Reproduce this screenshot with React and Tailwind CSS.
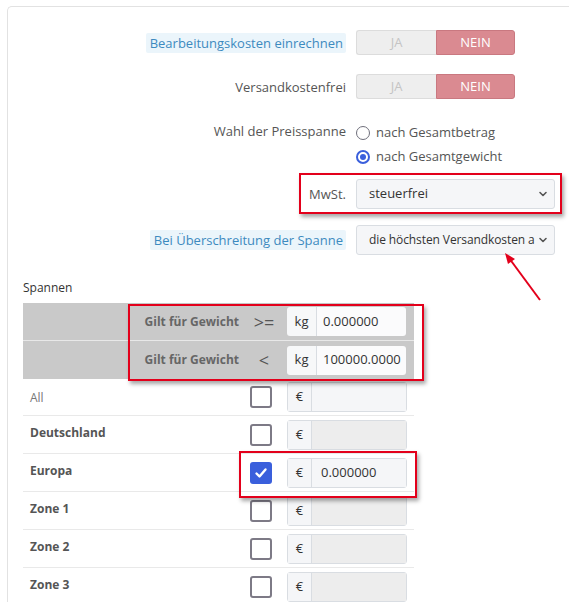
import { useState } from 'react'

const font = { fontFamily: '"Open Sans", "Noto Sans", sans-serif' }

function Chevron() {
  return (
    <svg width="10" height="10" viewBox="0 0 10 10" className="shrink-0">
      <path d="M2 3.5 L5 6.5 L8 3.5" fill="none" stroke="#555" strokeWidth="1.6" strokeLinecap="round" strokeLinejoin="round" />
    </svg>
  )
}

function Toggle() {
  return (
    <div className="flex h-[25px] w-[159px] text-[13px]">
      <div className="flex w-[80px] items-center justify-center rounded-l-[3px] border border-r-0 border-[#dcdcdc] bg-[#eeeeee] text-[#c4c4c4]">
        JA
      </div>
      <div className="flex flex-1 items-center justify-center rounded-r-[3px] border border-[#c97880] bg-[#da8a91] text-white">
        NEIN
      </div>
    </div>
  )
}

function Radio({ checked, label }) {
  return (
    <div className="flex h-[24px] items-center gap-[6px] text-[13px] text-[#555]">
      <span
        className={
          checked
            ? 'flex h-[14px] w-[14px] items-center justify-center rounded-full border-2 border-[#3a5fdc]'
            : 'h-[14px] w-[14px] rounded-full border-[1.5px] border-[#6f6f7b]'
        }
      >
        {checked && <span className="h-[6px] w-[6px] rounded-full bg-[#3a5fdc]" />}
      </span>
      <span>{label}</span>
    </div>
  )
}

function FakeSelect({ value, tight }) {
  return (
    <div className="flex h-[30px] w-[199px] items-center rounded-[3px] border border-[#d9dde2] bg-[#f5f6f8] pl-[12px] pr-[6px] text-[13px] text-[#333]">
      <span className={`flex-1 overflow-hidden whitespace-nowrap ${tight ? 'text-[12px] tracking-[-0.1px]' : ''}`}>{value}</span>
      <Chevron />
    </div>
  )
}

function FormRow({ label, highlight, children, align = 'items-center' }) {
  return (
    <div className={`flex ${align} gap-[10px]`}>
      <div className="flex w-[338px] shrink-0 justify-end text-[13px]">
        {highlight ? (
          <span className="rounded-[2px] bg-[#ebf5fb] px-[4px] pr-[3px] leading-[20px] text-[#3d8abf]">{label}</span>
        ) : (
          <span className="leading-[20px] text-[#555]">{label}</span>
        )}
      </div>
      {children}
    </div>
  )
}

function Checkbox({ checked }) {
  if (checked) {
    return (
      <span className="flex h-[22px] w-[22px] items-center justify-center rounded-[3px] bg-[#3a5fdc]">
        <svg width="14" height="14" viewBox="0 0 14 14">
          <path d="M2.5 7.5 L5.5 10.5 L11.5 3.5" fill="none" stroke="white" strokeWidth="2.4" strokeLinecap="round" strokeLinejoin="round" />
        </svg>
      </span>
    )
  }
  return <span className="h-[22px] w-[22px] rounded-[3px] border-2 border-[#7d7a86] bg-white" />
}

function PriceInput({ value, disabled }) {
  return (
    <div className="flex h-[30px] w-[120px] rounded-[3px] border border-[#d9dde2] text-[13px]">
      <div className="flex w-[24px] items-center justify-center border-r border-[#d9dde2] bg-[#f5f6f8] text-[#333]">€</div>
      <div
        className={`flex flex-1 items-center pl-[9px] text-[#333] ${disabled ? 'bg-[#ededed]' : 'bg-[#f5f6f8]'}`}
      >
        {value}
      </div>
    </div>
  )
}

function WeightRow({ sign, value, border }) {
  return (
    <div className={`flex h-[38px] items-center bg-[#c9c9c9] ${border ? 'border-b border-[#e8e8e8]' : ''}`}>
      <div className="flex flex-1 items-center justify-end text-[12px] font-bold text-[#666]">
        <span>Gilt für Gewicht</span>
        <span className="ml-[10px] w-[30px] text-center text-[18px] leading-[20px] font-normal text-[#555]">{sign}</span>
      </div>
      <div className="ml-[8px] mr-[8px] flex h-[29px] w-[119px] overflow-hidden rounded-[3px] text-[13px] text-[#333]">
        <div className="flex w-[30px] items-center justify-center border-r border-[#d9dde2] bg-[#f7f8f9]">kg</div>
        <div className="flex flex-1 items-center bg-[#fbfbfc] pl-[6px]">{value}</div>
      </div>
    </div>
  )
}

const zones = [
  { name: 'All', bold: false, disabled: false },
  { name: 'Deutschland', bold: true, disabled: true },
  { name: 'Europa', bold: true, disabled: false, checked: true, value: '0.000000' },
  { name: 'Zone 1', bold: true, disabled: true },
  { name: 'Zone 2', bold: true, disabled: true },
  { name: 'Zone 3', bold: true, disabled: true },
]

export default function App() {
  const [zoneList] = useState(zones)

  return (
    <div className="relative h-[602px] w-[569px] overflow-hidden bg-white" style={font}>
      <div className="ml-[7px] mt-[6px] w-[600px] rounded-tl-[5px] border-l border-t border-[#e2e2e2] pb-10">
        <div className="mt-[23px] flex flex-col">
          <FormRow label="Bearbeitungskosten einrechnen" highlight>
            <Toggle />
          </FormRow>
          <div className="mt-[19px]">
            <FormRow label="Versandkostenfrei">
              <Toggle />
            </FormRow>
          </div>
          <div className="mt-[22px]">
            <FormRow label="Wahl der Preisspanne" align="items-start">
              <div className="flex flex-col">
                <Radio label="nach Gesamtbetrag" />
                <Radio label="nach Gesamtgewicht" checked />
              </div>
            </FormRow>
          </div>
          <div className="mt-[10px]">
            <FormRow label="MwSt.">
              <FakeSelect value="steuerfrei" />
            </FormRow>
          </div>
          <div className="mt-[16px]">
            <FormRow label="Bei Überschreitung der Spanne" highlight>
              <FakeSelect value="die höchsten Versandkosten a" tight />
            </FormRow>
          </div>
        </div>

        <div className="ml-[15px] mt-[24px] text-[12px] leading-[18px] text-[#333]">Spannen</div>

        <div className="ml-[15px] mt-[6px] w-[391px]">
          <WeightRow sign=">=" value="0.000000" border />
          <WeightRow sign="<" value="100000.0000" />
          {zoneList.map((z, i) => (
            <div
              key={z.name}
              className={`flex items-center border-b border-[#e9e9e9] ${i === 0 ? 'h-[37px]' : 'h-[38px]'}`}
            >
              <div
                className={`flex-1 self-start pl-[7px] text-[12px] leading-[20px] ${
                  z.bold ? 'pt-[7px] font-bold text-[#555]' : 'pt-[9px] text-[#777]'
                }`}
              >
                {z.name}
              </div>
              <Checkbox checked={z.checked} />
              <div className="ml-[15px] mr-[7px]">
                <PriceInput value={z.value} disabled={z.disabled} />
              </div>
            </div>
          ))}
        </div>
      </div>

      {/* annotation overlays */}
      <div className="pointer-events-none absolute left-[299px] top-[173px] h-[41px] w-[263px] border-2 border-[#e3001b] shadow-[2px_3px_4px_rgba(0,0,0,0.35)]" />
      <div className="pointer-events-none absolute left-[128px] top-[304px] h-[77px] w-[296px] border-2 border-[#e3001b] shadow-[2px_3px_4px_rgba(0,0,0,0.35)]" />
      <div className="pointer-events-none absolute left-[239px] top-[451px] h-[47px] w-[178px] border-2 border-[#e3001b] shadow-[2px_3px_4px_rgba(0,0,0,0.35)]" />
      <svg className="pointer-events-none absolute left-0 top-0" width="569" height="602">
        <line x1="540" y1="300" x2="509" y2="258" stroke="#e3001b" strokeWidth="2" />
        <polygon points="505,253 515,259 508,264" fill="#e3001b" />
      </svg>
    </div>
  )
}
